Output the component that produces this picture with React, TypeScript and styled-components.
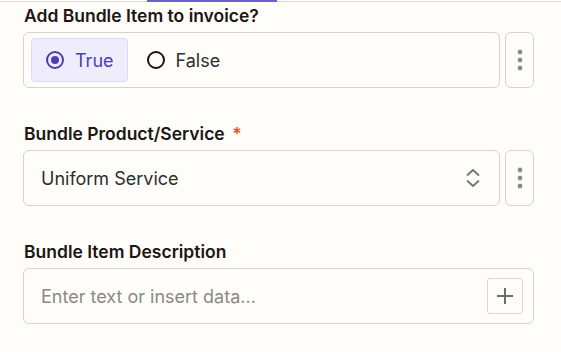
import * as React from "react";
import styled, { createGlobalStyle } from "styled-components";

const GlobalStyle = createGlobalStyle`
  html, body {
    margin: 0;
    padding: 0;
    background: #fffdf9;
  }
  body {
    font-family: Inter, "Noto Sans", "Liberation Sans", sans-serif;
    color: #2d2e2e;
  }
`;

export default function App(): JSX.Element {
    const [answer, setAnswer] = React.useState<boolean>(true);

    return (
        <Page>
            <GlobalStyle />
            <TopBar>
                <TabIndicator />
            </TopBar>

            <Fields>
                <Field>
                    <Label>Add Bundle Item to invoice?</Label>
                    <Row>
                        <RadioBox>
                            <RadioOption selected={ answer } onClick={ () => setAnswer(true) }>
                                <RadioCircle selected={ answer } />
                                True
                            </RadioOption>
                            <RadioOption selected={ !answer } onClick={ () => setAnswer(false) }>
                                <RadioCircle selected={ !answer } />
                                False
                            </RadioOption>
                        </RadioBox>
                        <KebabButton><KebabIcon /></KebabButton>
                    </Row>
                </Field>

                <Field>
                    <Label>Bundle Product/Service <Required>*</Required></Label>
                    <Row>
                        <SelectBox>
                            <SelectValue>Uniform Service</SelectValue>
                            <UpDownIcon />
                        </SelectBox>
                        <KebabButton><KebabIcon /></KebabButton>
                    </Row>
                </Field>

                <Field>
                    <Label>Bundle Item Description</Label>
                    <TextBox>
                        <Placeholder>Enter text or insert data...</Placeholder>
                        <PlusButton><PlusIcon /></PlusButton>
                    </TextBox>
                </Field>
            </Fields>
        </Page>
    );
}

/*
* Icons
* */

const KebabIcon = () => (
    <svg width="6" height="22" viewBox="0 0 6 22">
        <circle cx="3" cy="3" r="2.4" fill="#8a8a87" />
        <circle cx="3" cy="11" r="2.4" fill="#8a8a87" />
        <circle cx="3" cy="19" r="2.4" fill="#8a8a87" />
    </svg>
);

const UpDownIcon = () => (
    <svg width="14" height="20" viewBox="0 0 14 20" fill="none" stroke="#76746f" strokeWidth="1.8" strokeLinecap="round" strokeLinejoin="round">
        <path d="M1.5 7 L7 2 L12.5 7" />
        <path d="M1.5 13 L7 18 L12.5 13" />
    </svg>
);

const PlusIcon = () => (
    <svg width="16" height="16" viewBox="0 0 16 16" fill="none" stroke="#6f6d69" strokeWidth="2">
        <path d="M8 0 V16" />
        <path d="M0 8 H16" />
    </svg>
);

/*
* Styles
* */

const Page = styled.div`
  width: 561px;
  height: 352px;
  overflow: hidden;
`;

const TopBar = styled.div`
  height: 1px;
  border-bottom: 1px solid #dcdad4;
  display: flex;
`;

const TabIndicator = styled.div`
  margin-left: 147px;
  width: 130px;
  height: 2px;
  background: #6a5fd0;
`;

const Fields = styled.div`
  display: flex;
  flex-direction: column;
  gap: 36px;
  padding: 4px 27px 0 23px;
`;

const Field = styled.div`
  display: flex;
  flex-direction: column;
  gap: 6px;
`;

const Label = styled.div`
  font-size: 17.5px;
  line-height: 20px;
  font-weight: 600;
  color: #201515;
  padding-left: 1px;
`;

const Required = styled.span`
  color: #ff4f00;
  margin-left: 3px;
`;

const Row = styled.div`
  display: flex;
  gap: 5px;
`;

const RadioBox = styled.div`
  flex: 1;
  height: 56px;
  box-sizing: border-box;
  border: 1px solid #d6d3cc;
  border-radius: 6px;
  display: flex;
  align-items: center;
  gap: 4px;
  padding: 0 7px;
`;

const RadioOption = styled.div<{ selected: boolean }>`
  height: 44px;
  box-sizing: border-box;
  display: flex;
  align-items: center;
  gap: 11px;
  padding: 0 13px 0 14px;
  border-radius: 4px;
  border: 1px solid ${ p => p.selected ? "#dcd8f6" : "transparent" };
  background: ${ p => p.selected ? "#efedfc" : "transparent" };
  color: ${ p => p.selected ? "#4c3fb5" : "#2d2e2e" };
  font-size: 18px;
  cursor: pointer;
`;

const RadioCircle = styled.span<{ selected: boolean }>`
  width: 18px;
  height: 18px;
  box-sizing: border-box;
  border-radius: 50%;
  border: 2px solid ${ p => p.selected ? "#4c3fb5" : "#201515" };
  display: flex;
  align-items: center;
  justify-content: center;

  &::after {
    content: "";
    width: 8px;
    height: 8px;
    border-radius: 50%;
    background: ${ p => p.selected ? "#4c3fb5" : "transparent" };
  }
`;

const KebabButton = styled.button`
  width: 29px;
  height: 56px;
  padding: 0;
  box-sizing: border-box;
  border: 1px solid #d6d3cc;
  border-radius: 6px;
  background: transparent;
  display: flex;
  align-items: center;
  justify-content: center;
  cursor: pointer;
`;

const SelectBox = styled.div`
  flex: 1;
  height: 56px;
  box-sizing: border-box;
  border: 1px solid #d6d3cc;
  border-radius: 6px;
  display: flex;
  align-items: center;
  justify-content: space-between;
  padding: 0 19px 0 17px;
`;

const SelectValue = styled.span`
  font-size: 18px;
  color: #2d2e2e;
`;

const TextBox = styled.div`
  height: 56px;
  box-sizing: border-box;
  border: 1px solid #d6d3cc;
  border-radius: 6px;
  display: flex;
  align-items: center;
  justify-content: space-between;
  padding: 0 10px 0 17px;
`;

const Placeholder = styled.span`
  font-size: 18px;
  color: #8b8985;
`;

const PlusButton = styled.button`
  width: 36px;
  height: 36px;
  padding: 0;
  box-sizing: border-box;
  border: 1px solid #dcd9d2;
  border-radius: 3px;
  background: transparent;
  display: flex;
  align-items: center;
  justify-content: center;
  cursor: pointer;
`;
